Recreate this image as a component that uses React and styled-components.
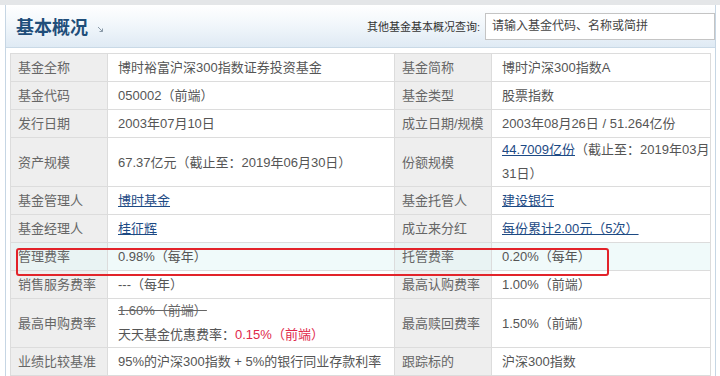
import styled, { createGlobalStyle } from "styled-components";

const GlobalStyle = createGlobalStyle`
  body {
    margin: 0;
    background: #fff;
    font-family: "Liberation Sans", "Noto Sans CJK SC", sans-serif;
  }
`;

const Page = styled.div`
  width: 720px;
  height: 376px;
  overflow: hidden;
  border-top: 5px solid #e4e6e8;
  box-sizing: border-box;
`;

const Box = styled.div`
  margin: 0 4px 0 5px;
  border-left: 1px solid #c6d6e4;
  border-right: 1px solid #c6d6e4;
  height: 100%;
`;

const Header = styled.div`
  display: flex;
  align-items: center;
  justify-content: space-between;
  height: 42px;
  padding: 0 0 0 10px;
  background: linear-gradient(#ffffff, #f2f7fb 45%, #dfeaf4);
  border-bottom: 1px solid #c9d9e6;
`;

const Title = styled.h2`
  margin: 0;
  display: flex;
  align-items: center;
  gap: 9px;
  font-family: "Noto Sans CJK SC", sans-serif;
  font-size: 18px;
  font-weight: 700;
  color: #1f4e7a;
`;

const Query = styled.div`
  display: flex;
  align-items: center;
  gap: 5px;
  font-size: 11px;
  color: #333;
`;

const SearchInput = styled.input`
  width: 230px;
  height: 27px;
  box-sizing: border-box;
  border: 1px solid #c4c4c4;
  padding: 0 6px;
  font-family: inherit;
  font-size: 12px;
  color: #444;
  background: #fff;

  &::placeholder {
    color: #444;
  }
`;

const TableWrap = styled.div`
  position: relative;
  margin: 5px 0 0 4px;
  width: 700px;
`;

const Table = styled.table`
  width: 700px;
  table-layout: fixed;
  border-collapse: collapse;
  font-size: 13px;
  color: #555;
`;

const Row = styled.tr`
  background: ${(p) => (p.$hl ? "#f0fafa" : "transparent")};
`;

const Label = styled.td`
  background: ${(p) => (p.$hl ? "#e9f3f3" : "#eeeeee")};
  border: 1px solid #dcdcdc;
  padding: 3px 7px;
  line-height: 21px;
  color: #666;
  white-space: nowrap;
  vertical-align: middle;
`;

const Value = styled.td`
  border: 1px solid #dcdcdc;
  padding: ${(p) => (p.$tight ? "0 10px" : "3px 10px")};
  line-height: ${(p) => (p.$tight ? "24px" : "21px")};
  white-space: nowrap;
  vertical-align: middle;
`;

const Link = styled.a`
  color: #1d4a84;
  text-decoration: underline;
`;

const Old = styled.span`
  text-decoration: line-through;
  color: #666;
`;

const Red = styled.span`
  color: #e0284a;
`;

const Mark = styled.div`
  position: absolute;
  left: 6px;
  top: 195px;
  width: 589px;
  height: 24px;
  border: 2px solid #e2232a;
  border-radius: 3px;
  pointer-events: none;
`;

function Arrow() {
  return (
    <svg width="7" height="7" viewBox="0 0 7 7" style={{ marginTop: 6 }}>
      <path d="M1 1 L5.5 5.5 M5.5 2.5 V5.5 H2.5" stroke="#8a9aa8" strokeWidth="1" fill="none" />
    </svg>
  );
}

export default function App() {
  return (
    <>
      <GlobalStyle />
      <Page>
        <Box>
          <Header>
            <Title>
              基本概况
              <Arrow />
            </Title>
            <Query>
              其他基金基本概况查询:
              <SearchInput placeholder="请输入基金代码、名称或简拼" />
            </Query>
          </Header>
          <TableWrap>
            <Table>
              <colgroup>
                <col style={{ width: 97 }} />
                <col style={{ width: 287 }} />
                <col style={{ width: 97 }} />
                <col style={{ width: 219 }} />
              </colgroup>
              <tbody>
                <Row>
                  <Label>基金全称</Label>
                  <Value>博时裕富沪深300指数证券投资基金</Value>
                  <Label>基金简称</Label>
                  <Value>博时沪深300指数A</Value>
                </Row>
                <Row>
                  <Label>基金代码</Label>
                  <Value>050002（前端）</Value>
                  <Label>基金类型</Label>
                  <Value>股票指数</Value>
                </Row>
                <Row>
                  <Label>发行日期</Label>
                  <Value>2003年07月10日</Value>
                  <Label>成立日期/规模</Label>
                  <Value>2003年08月26日 / 51.264亿份</Value>
                </Row>
                <Row>
                  <Label>资产规模</Label>
                  <Value>67.37亿元（截止至：2019年06月30日）</Value>
                  <Label>份额规模</Label>
                  <Value $tight>
                    <Link>44.7009亿份</Link>（截止至：2019年03月
                    <br />
                    31日）
                  </Value>
                </Row>
                <Row>
                  <Label>基金管理人</Label>
                  <Value>
                    <Link>博时基金</Link>
                  </Value>
                  <Label>基金托管人</Label>
                  <Value>
                    <Link>建设银行</Link>
                  </Value>
                </Row>
                <Row>
                  <Label>基金经理人</Label>
                  <Value>
                    <Link>桂征辉</Link>
                  </Value>
                  <Label>成立来分红</Label>
                  <Value>
                    <Link>每份累计2.00元（5次）</Link>
                  </Value>
                </Row>
                <Row $hl>
                  <Label $hl>管理费率</Label>
                  <Value>0.98%（每年）</Value>
                  <Label $hl>托管费率</Label>
                  <Value>0.20%（每年）</Value>
                </Row>
                <Row>
                  <Label>销售服务费率</Label>
                  <Value>---（每年）</Value>
                  <Label>最高认购费率</Label>
                  <Value>1.00%（前端）</Value>
                </Row>
                <Row>
                  <Label>最高申购费率</Label>
                  <Value $tight>
                    <Old>1.60%（前端）</Old>
                    <br />
                    天天基金优惠费率：<Red>0.15%（前端）</Red>
                  </Value>
                  <Label>最高赎回费率</Label>
                  <Value>1.50%（前端）</Value>
                </Row>
                <Row>
                  <Label>业绩比较基准</Label>
                  <Value>95%的沪深300指数 + 5%的银行同业存款利率</Value>
                  <Label>跟踪标的</Label>
                  <Value>沪深300指数</Value>
                </Row>
              </tbody>
            </Table>
            <Mark />
          </TableWrap>
        </Box>
      </Page>
    </>
  );
}
